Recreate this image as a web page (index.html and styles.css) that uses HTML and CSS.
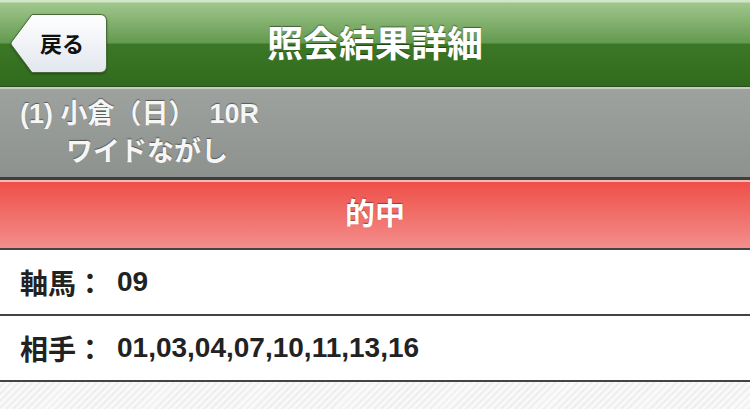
FILE: index.html
```html
<!DOCTYPE html>
<html lang="ja">

<head>
    <meta charset="UTF-8">
    <meta name="viewport" content="width=device-width, initial-scale=1.0">
    <title>照会結果詳細</title>
    <link rel="stylesheet" href="styles.css">
</head>

<body>
    <header class="topbar">
        <div class="topbar-left">
            <a class="back-button" href="#">
                <svg class="back-shape" width="97" height="59" viewBox="0 0 97 59">
                    <defs>
                        <linearGradient id="backFill" x1="0" y1="0" x2="0" y2="1">
                            <stop offset="0" stop-color="#ffffff"/>
                            <stop offset="1" stop-color="#e2e6ee"/>
                        </linearGradient>
                    </defs>
                    <path d="M22 0.5 H90 Q96.5 0.5 96.5 7 V52 Q96.5 58.5 90 58.5 H22 L1.5 31 Q0.5 29.5 1.5 28 Z" fill="url(#backFill)" stroke="#4a6a3a" stroke-width="1"/>
                </svg>
                <span class="back-label">戻る</span>
            </a>
        </div>
        <h1>照会結果詳細</h1>
        <div></div>
    </header>

    <section class="race">
        <div>(1) 小倉（日）<span class="race-no">10R</span></div>
        <div class="race-type">ワイドながし</div>
    </section>

    <div class="result">的中</div>

    <div class="row">
        <span class="row-label">軸馬：</span>
        <span class="row-value">09</span>
    </div>
    <div class="row">
        <span class="row-label">相手：</span>
        <span class="row-value">01,03,04,07,10,11,13,16</span>
    </div>
</body>

</html>
```

FILE: styles.css
```css
body {
    margin: 0;
    padding: 0;
    font-family: "Liberation Sans", "Noto Sans CJK JP", sans-serif;
    font-weight: bold;
    min-height: 409px;
    background: repeating-linear-gradient(-45deg, #efefef 0, #efefef 2px, #f9f9f9 2px, #f9f9f9 5px);
}

.topbar {
    display: grid;
    grid-template-columns: 1fr auto 1fr;
    align-items: center;
    height: 86px;
    border-bottom: 1px solid #2a4e1c;
    background: linear-gradient(#d2e5c6 0, #d2e5c6 2px, #9fc78c 3px, #64994f 43px, #3b7826 44px, #316a1d 86px);
}

.topbar-left {
    padding-left: 10px;
}

.topbar h1 {
    margin: 0;
    font-size: 36px;
    color: #fff;
    text-shadow: 0 -1px 1px rgba(0, 0, 0, 0.45);
    margin-top: -5px;
}

.back-button {
    position: relative;
    display: flex;
    align-items: center;
    width: 97px;
    height: 59px;
    margin-top: 1px;
    text-decoration: none;
    color: #111;
}

.back-shape {
    position: absolute;
    left: 0;
    top: 0;
    filter: drop-shadow(0 1px 1px rgba(0, 0, 0, 0.35));
}

.back-label {
    position: relative;
    padding-left: 30px;
    font-size: 22px;
    margin-top: -3px;
}

.race {
    height: 82px;
    padding-top: 6px;
    padding-left: 20px;
    border-top: 2px solid #c9cdc9;
    border-bottom: 3px solid #3e3e3e;
    background: linear-gradient(#9ea29e, #8e928e);
    color: #f6f6f6;
    font-size: 27px;
    line-height: 38px;
    text-shadow: 0 -1px 1px rgba(0, 0, 0, 0.45);
}

.race-no {
    margin-left: 14px;
}

.race-type {
    padding-left: 46px;
}

.result {
    height: 66px;
    line-height: 64px;
    text-align: center;
    border-top: 2px solid #f6bbb4;
    border-bottom: 2px solid #444;
    background: linear-gradient(#ef4f48, #f38e8c);
    color: #fff;
    font-size: 30px;
    text-shadow: 0 -1px 1px rgba(0, 0, 0, 0.4);
}

.row {
    display: flex;
    align-items: center;
    height: 64px;
    padding-left: 20px;
    border-bottom: 2px solid #444;
    background: #fff;
    color: #222;
    font-size: 28px;
}

.row-value {
    margin-left: 13px;
}
```
